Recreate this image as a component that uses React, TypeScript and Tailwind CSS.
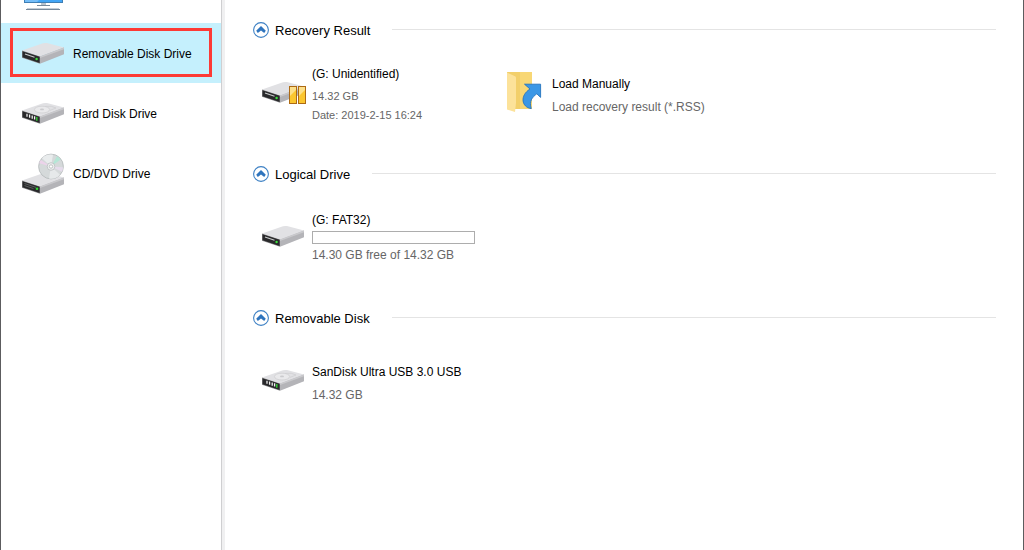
import React, { useState } from "react";

type DriveKind = "removable" | "hard" | "optical";

const SIDEBAR_ITEMS: { kind: DriveKind; label: string }[] = [
  { kind: "removable", label: "Removable Disk Drive" },
  { kind: "hard", label: "Hard Disk Drive" },
  { kind: "optical", label: "CD/DVD Drive" },
];

function MonitorIcon() {
  return (
    <svg width="42" height="10" viewBox="0 0 42 10" aria-hidden="true">
      <rect x="2" y="0" width="39" height="3" fill="#3f7fb5" />
      <rect x="3" y="0" width="37" height="2" fill="#42a5f5" />
      <path d="M3 0H17L15 2H3z" fill="#74bdf8" />
      <rect x="19" y="3" width="5" height="2" fill="#b9c3cd" />
      <rect x="15" y="5" width="13" height="1" fill="#76889a" />
      <rect x="5" y="8" width="32" height="1" fill="#c3ccd6" />
      <rect x="4" y="9" width="34" height="1" fill="#76889a" />
    </svg>
  );
}

// Shared drive body, 42 x 21
function DriveBody({ kind }: { kind: DriveKind }) {
  return (
    <>
      <path d="M0 7.6L21 .2Q23 -.2 25 .1L42 4.6L18 13.4z" fill="#e1e1e4" />
      <path d="M18 13.4L42 4.6V11.2L18 20.8z" fill="#b4b4b8" />
      <path d="M18 13.4L42 4.6V6.2L18 15z" fill="#c9c9cc" />
      <path d="M0 7.6L18 13.4V20.8L0 14.8z" fill="#8d8d8f" />
      <path d="M.5 8.3L17.6 13.8V20L.5 14.2z" fill="#29292b" />
      {kind === "removable" && (
        <>
          <path d="M3 11L12.5 14.2" stroke="#c9cccc" strokeWidth="1.2" />
          <circle cx="14.6" cy="16" r="1.2" fill="#3ce03c" />
        </>
      )}
      {kind === "optical" && (
        <>
          <path d="M2.5 10.5L14 14.4M2.5 12.6L11.5 15.6" stroke="#666a6a" strokeWidth="0.8" />
          <circle cx="15" cy="15.8" r="1.3" fill="#2fd82f" />
        </>
      )}
      {kind === "hard" && (
        <>
          <path d="M5 10.8V13.8M7.6 11.6V14.8M10.2 12.5V15.7M12.6 13.3V16.6" stroke="#f2f2f2" strokeWidth="1.3" />
          <path d="M14.8 14V17.8" stroke="#35d035" strokeWidth="1.4" />
          <ellipse cx="20" cy="6.6" rx="7.6" ry="3.4" fill="#e9e9eb" stroke="#cfcfd2" strokeWidth="0.8" />
          <ellipse cx="20" cy="6.4" rx="2" ry="0.9" fill="#cbcbce" />
          <path d="M23 3.4Q30 2.4 34 5L28 7.4" fill="none" stroke="#cfcfd2" strokeWidth="0.8" />
        </>
      )}
    </>
  );
}

function DriveIcon({ kind, paused = false }: { kind: DriveKind; paused?: boolean }) {
  if (kind === "optical") {
    return (
      <svg width="42" height="42" viewBox="0 0 42 42" aria-hidden="true">
        <g transform="translate(0 21)">
          <DriveBody kind="optical" />
        </g>
        <circle cx="29" cy="14.5" r="12.4" fill="#d5d9da" stroke="#b3b7b9" strokeWidth="0.8" />
        <path d="M29 14.5L20 6.2A12 12 0 0 1 31 2.7z" fill="#e9eced" />
        <path d="M29 14.5L38 22.7A12 12 0 0 1 27 26.4z" fill="#e6e9ea" />
        <path d="M29 14.5L35 4.3A12 12 0 0 1 38.6 7.5z" fill="#b5e6d6" />
        <path d="M29 14.5L17.2 11.3A12 12 0 0 1 18.8 8z" fill="#ecd3ea" />
        <path d="M29 14.5L41 15.2A12 12 0 0 1 40 19.7z" fill="#e6dcec" />
        <circle cx="29" cy="14.5" r="3.8" fill="#eef0f0" stroke="#b4b8ba" strokeWidth="0.7" />
        <circle cx="29" cy="14.5" r="1.7" fill="#ffffff" stroke="#a9adaf" strokeWidth="0.7" />
      </svg>
    );
  }
  return (
    <svg width="42" height="21" viewBox="0 0 42 21" className="overflow-visible" aria-hidden="true">
      <DriveBody kind={kind} />
      {paused && (
        <>
          <rect x="27.5" y="4.5" width="7" height="17" fill="#fbc62f" stroke="#ad6a14" />
          <path d="M28 5H34V8L28 14z" fill="#fde08a" />
          <rect x="36.5" y="4.5" width="7" height="17" fill="#fbc62f" stroke="#ad6a14" />
          <path d="M37 5H43V8L37 14z" fill="#fde08a" />
        </>
      )}
    </svg>
  );
}

function FolderIcon() {
  return (
    <svg width="38" height="42" viewBox="0 0 38 42" aria-hidden="true">
      <path d="M1 1H26V38H9z" fill="#f8d775" />
      <path d="M1 1H14V38H9z" fill="#f2cf6a" />
      <path d="M1 1.5L9.5 5.5Q10 6 10 7V32L9 41L1 38.5z" fill="#fce29a" />
      <path
        d="M18.5 13.2H34.6V26.4L30.8 22.8C26 26.4 23 30 25.2 37.6C15.5 36.2 13.6 24.6 24 18z"
        fill="#3b97e6"
        stroke="#2574bd"
        strokeWidth="0.9"
      />
    </svg>
  );
}

function ToggleIcon({ open }: { open: boolean }) {
  return (
    <svg width="16" height="16" viewBox="0 0 16 16" className={open ? "" : "rotate-180"} aria-hidden="true">
      <circle cx="8" cy="8" r="7.4" fill="#fff" stroke="#3d80c4" strokeWidth="1.1" />
      <path d="M3.2 8.8L8 4L12.8 8.8L11.2 11L8 8.6L4.8 11z" fill="#2f74bd" />
    </svg>
  );
}

function Section({ title, children }: { title: string; children: React.ReactNode }) {
  const [open, setOpen] = useState(true);

  return (
    <section>
      <h2 className="flex items-center">
        <button
          type="button"
          aria-expanded={open}
          onClick={() => setOpen(!open)}
          className="flex h-4 items-center gap-1.5 text-[13px] leading-4 cursor-pointer"
        >
          <ToggleIcon open={open} />
          <span className="pt-0.5">{title}</span>
        </button>
        <span className="ml-[22px] mb-px h-px flex-1 bg-[#e4e4e4]" />
      </h2>
      <div className="flex h-32 items-center pb-3.5 pl-[9px]">{open && children}</div>
    </section>
  );
}

function Entry({ icon, children }: { icon: React.ReactNode; children: React.ReactNode }) {
  return (
    <div className="flex min-w-[244px] items-center gap-2">
      <span className="shrink-0 pb-1.5">{icon}</span>
      <div className="text-xs leading-4">{children}</div>
    </div>
  );
}

export default function App() {
  const [selected, setSelected] = useState<DriveKind>("removable");

  return (
    <div className="flex min-h-screen border-x border-[#5c5c5e] bg-white font-['Liberation_Sans',Arial,sans-serif] text-black">
      {/* Sidebar */}
      <nav className="w-[220px] shrink-0">
        <div className="flex h-[23px] items-start pl-[21px]">
          <MonitorIcon />
        </div>
        {SIDEBAR_ITEMS.map(({ kind, label }) => (
          <button
            key={kind}
            type="button"
            onClick={() => setSelected(kind)}
            className={`relative flex h-15 w-full items-center gap-[9px] pl-[21px] text-xs leading-4 cursor-pointer ${
              selected === kind ? "bg-[#c5f0fd]" : ""
            }`}
          >
            <DriveIcon kind={kind} />
            <span className="pt-0.5">{label}</span>
            {selected === kind && (
              <span className="absolute inset-x-[9px] top-[5px] bottom-1.5 border-3 border-[#fd3a35]" />
            )}
          </button>
        ))}
      </nav>
      <div className="w-1 shrink-0 border-l border-[#cfcfd1] bg-[#f0f0f1]" />

      {/* Drive list */}
      <main className="min-w-0 flex-1 pt-[22px] pr-[27px] pl-7">
        <Section title="Recovery Result">
          <Entry icon={<DriveIcon kind="removable" paused />}>
            <p>(G: Unidentified)</p>
            <p className="mt-1.5 text-[11px] text-[#666]">14.32 GB</p>
            <p className="mt-[3px] pb-0.5 text-[11px] text-[#666]">Date: 2019-2-15 16:24</p>
          </Entry>
          <Entry icon={<FolderIcon />}>
            <p>Load Manually</p>
            <p className="mt-[7px] text-[#666]">Load recovery result (*.RSS)</p>
          </Entry>
        </Section>

        <Section title="Logical Drive">
          <Entry icon={<DriveIcon kind="removable" />}>
            <p>(G: FAT32)</p>
            <progress
              aria-label="Used space on G:"
              value={0}
              max={100}
              className="my-[3px] block h-[13px] w-[163px] appearance-none border border-[#adadad] bg-white [&::-webkit-progress-bar]:bg-white"
            />
            <p className="pb-1 text-[#666]">14.30 GB free of 14.32 GB</p>
          </Entry>
        </Section>

        <Section title="Removable Disk">
          <Entry icon={<DriveIcon kind="hard" />}>
            <p>SanDisk Ultra USB 3.0 USB</p>
            <p className="mt-[7px] text-[#666]">14.32 GB</p>
          </Entry>
        </Section>
      </main>
    </div>
  );
}
